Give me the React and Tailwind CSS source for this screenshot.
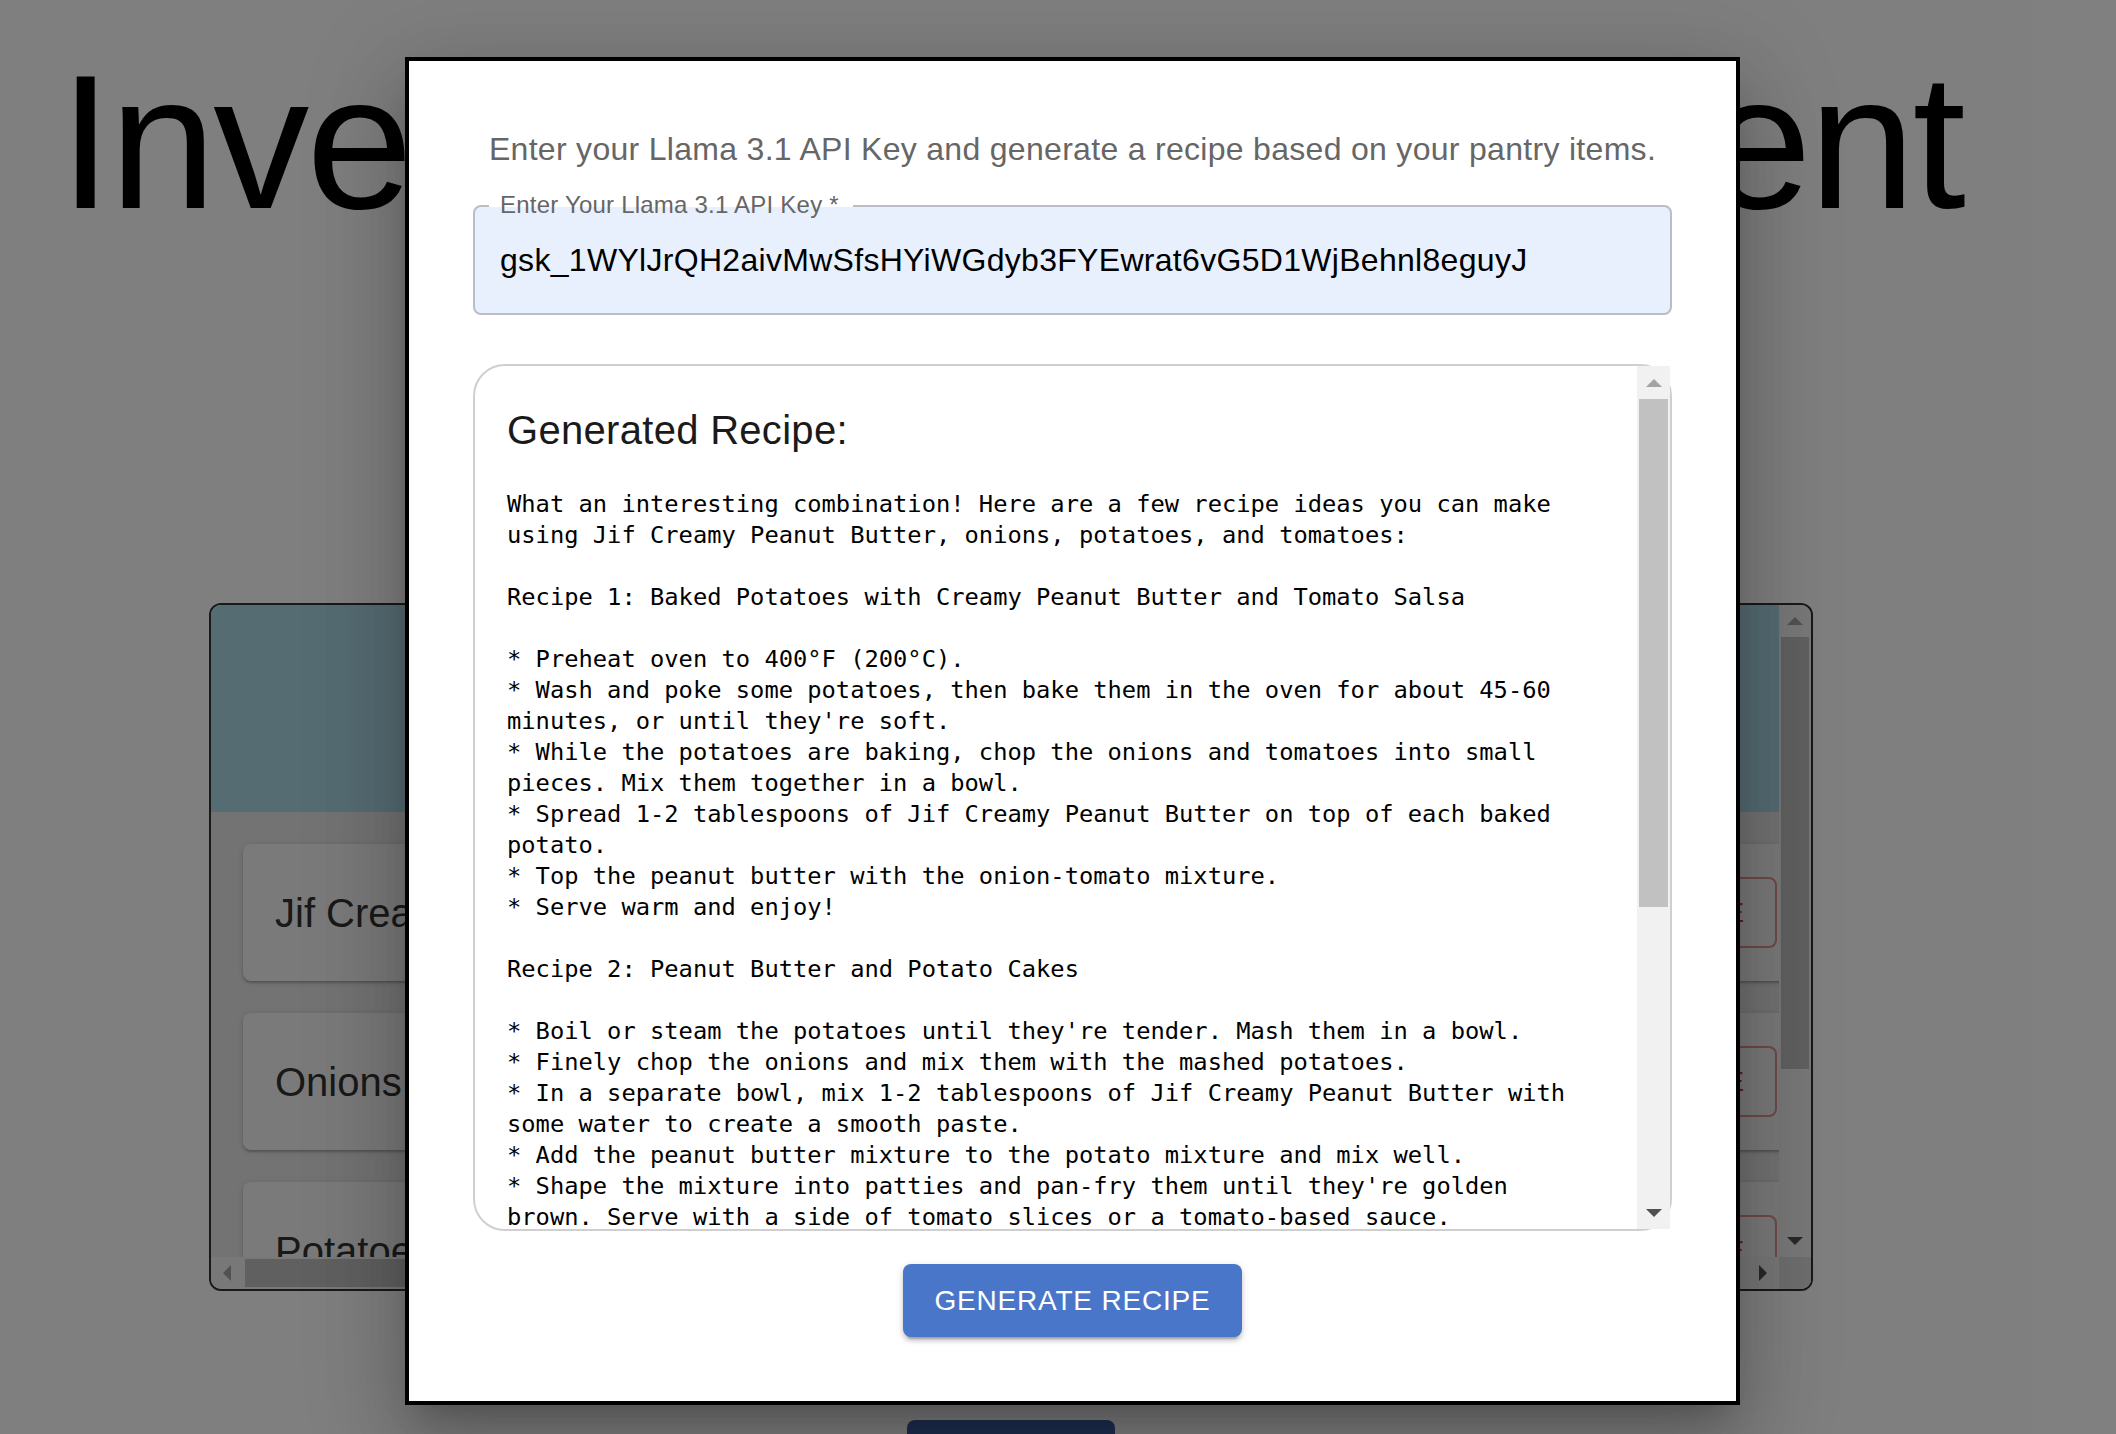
import React from 'react';

const recipeLines = [
  'What an interesting combination! Here are a few recipe ideas you can make',
  'using Jif Creamy Peanut Butter, onions, potatoes, and tomatoes:',
  '',
  'Recipe 1: Baked Potatoes with Creamy Peanut Butter and Tomato Salsa',
  '',
  '* Preheat oven to 400°F (200°C).',
  '* Wash and poke some potatoes, then bake them in the oven for about 45-60',
  "minutes, or until they're soft.",
  '* While the potatoes are baking, chop the onions and tomatoes into small',
  'pieces. Mix them together in a bowl.',
  '* Spread 1-2 tablespoons of Jif Creamy Peanut Butter on top of each baked',
  'potato.',
  '* Top the peanut butter with the onion-tomato mixture.',
  '* Serve warm and enjoy!',
  '',
  'Recipe 2: Peanut Butter and Potato Cakes',
  '',
  "* Boil or steam the potatoes until they're tender. Mash them in a bowl.",
  '* Finely chop the onions and mix them with the mashed potatoes.',
  '* In a separate bowl, mix 1-2 tablespoons of Jif Creamy Peanut Butter with',
  'some water to create a smooth paste.',
  '* Add the peanut butter mixture to the potato mixture and mix well.',
  "* Shape the mixture into patties and pan-fry them until they're golden",
  'brown. Serve with a side of tomato slices or a tomato-based sauce.',
  '',
  'Recipe 3: Tomato and Onion Soup with a Peanut Butter Swirl',
];

const pantry = [
  { name: 'Jif Creamy Peanut Butter', qty: 1 },
  { name: 'Onions', qty: 3 },
  { name: 'Potatoes', qty: 5 },
  { name: 'Tomatoes', qty: 4 },
];

// petite flèche de barre de défilement (style Chrome classique)
const Tri = ({ dir, color }) => {
  const vertical = dir === 'up' || dir === 'down';
  const points = {
    up: '0,8 8,0 16,8',
    down: '0,0 16,0 8,8',
    left: '8,0 8,16 0,8',
    right: '0,0 0,16 8,8',
  }[dir];
  return (
    <svg width={vertical ? 16 : 8} height={vertical ? 8 : 16} viewBox={vertical ? '0 0 16 8' : '0 0 8 16'}>
      <polygon points={points} fill={color} />
    </svg>
  );
};

const PantryCard = () => (
  <div className="mt-[349px] w-[1604px] h-[688px] border-2 border-[#333] rounded-[12px] overflow-hidden flex flex-col">
    <div className="flex flex-1 min-h-0">
      <div className="flex-1 min-w-0 overflow-hidden bg-[#e6e6e6]">
        <div className="w-[1630px]">
          <div className="h-[207px] bg-[#ADD8E6] flex items-center justify-center">
            <span className="text-[120px] text-[#333]">Inventory Items</span>
          </div>
          <div className="flex flex-col gap-[32px] px-[32px] pt-[32px] pb-[32px]">
            {pantry.map((p) => (
              <div
                key={p.name}
                className="h-[137px] w-[1566px] bg-[#f5f5f5] rounded-[8px] shadow-[0_2px_2px_rgba(0,0,0,0.2),0_1px_6px_rgba(0,0,0,0.12)] flex items-center justify-between px-[32px]"
              >
                <span className="text-[40px] text-[#333]">{p.name}</span>
                <span className="text-[40px] text-[#333]">Quantity: {p.qty}</span>
                <div className="flex items-center gap-[24px]">
                  <div className="h-[71px] px-[30px] flex items-center rounded-[8px] bg-[#3d5da2] text-white text-[28px] tracking-[0.8px]">
                    ADD
                  </div>
                  <div className="h-[71px] px-[30px] flex items-center rounded-[8px] border-2 border-[rgba(211,47,47,0.5)] text-[#d32f2f] text-[28px] tracking-[0.8px]">
                    REMOVE
                  </div>
                </div>
              </div>
            ))}
          </div>
        </div>
      </div>
      <div className="w-[32px] bg-[#f1f1f1] flex flex-col">
        <div className="h-[32px] flex items-center justify-center">
          <Tri dir="up" color="#a3a3a3" />
        </div>
        <div className="h-[432px] mx-[2px] bg-[#c1c1c1]" />
        <div className="flex-1" />
        <div className="h-[32px] flex items-center justify-center">
          <Tri dir="down" color="#505050" />
        </div>
      </div>
    </div>
    <div className="h-[32px] flex bg-[#f1f1f1]">
      <div className="w-[32px] flex items-center justify-center">
        <Tri dir="left" color="#a3a3a3" />
      </div>
      <div className="flex-1 flex py-[2px]">
        <div className="w-[1260px] bg-[#c1c1c1] ml-[2px]" />
      </div>
      <div className="w-[32px] flex items-center justify-center">
        <Tri dir="right" color="#505050" />
      </div>
      <div className="w-[32px] bg-[#dcdcdc]" />
    </div>
  </div>
);

const RecipeModal = () => (
  <div className="absolute left-[405px] top-[57px] w-[1335px] bg-white border-4 border-black px-[64px] pt-[64px] pb-[64px] shadow-[0_22px_30px_-14px_rgba(0,0,0,0.2),0_48px_76px_6px_rgba(0,0,0,0.14),0_18px_92px_16px_rgba(0,0,0,0.12)]">
    <p className="text-[32px] leading-[48px] tracking-[0.3px] text-center text-[#666]">
      Enter your Llama 3.1 API Key and generate a recipe based on your pantry items.
    </p>

    {/* champ de saisie de la clé (fond autofill) */}
    <div className="relative mt-[32px] h-[110px] border-2 border-[#b9bdc5] rounded-[8px] bg-[#e8f0fe] flex items-center pl-[25px]">
      <div className="absolute left-[14px] top-[-2px] h-[2px] w-[364px] bg-white" />
      <span className="absolute left-[25px] top-[-15px] text-[24px] leading-[26px] tracking-[0.22px] text-[#666] whitespace-nowrap">
        Enter Your Llama 3.1 API Key *
      </span>
      <span className="text-[32px] tracking-[0.3px] text-black whitespace-nowrap">
        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
      </span>
    </div>

    <div className="mt-[49px] h-[867px] border-2 border-[#cfcfcf] rounded-[32px] flex">
      <div className="flex-1 min-w-0 h-full overflow-hidden px-[32px] pt-[32px]">
        <h2 className="text-[40px] leading-[64px] tracking-[0.3px] text-[#1a1a1a]">Generated Recipe:</h2>
        <pre className="mt-[27px] font-['DejaVu_Sans_Mono',monospace] text-[23.75px] leading-[31px] text-black whitespace-pre">
          {recipeLines.join('\n')}
        </pre>
      </div>
      <div className="w-[33px] h-full bg-[#f1f1f1] flex flex-col">
        <div className="h-[33px] flex items-center justify-center">
          <Tri dir="up" color="#a3a3a3" />
        </div>
        <div className="h-[508px] mx-[2px] bg-[#c1c1c1]" />
        <div className="flex-1" />
        <div className="h-[33px] flex items-center justify-center">
          <Tri dir="down" color="#505050" />
        </div>
      </div>
    </div>

    <div className="mt-[33px] flex justify-center">
      <button className="h-[73px] px-[32px] rounded-[8px] bg-[#4a76c9] text-white text-[28px] leading-[49px] tracking-[0.8px] uppercase shadow-[0_6px_2px_-4px_rgba(0,0,0,0.2),0_4px_4px_0_rgba(0,0,0,0.14),0_2px_10px_0_rgba(0,0,0,0.12)]">
        Generate Recipe
      </button>
    </div>
  </div>
);

export default function App() {
  return (
    <div className="relative w-[2116px] h-[1434px] overflow-hidden bg-white font-['Liberation_Sans',Arial,sans-serif]">
      <div className="w-[2022px] flex flex-col items-center pt-[30px]">
        <h1 className="text-[192px] leading-[224px] tracking-[-3px] text-black whitespace-nowrap">
          Inventory Management
        </h1>
        <PantryCard />
        <div className="mt-[129px] w-[208px] h-[60px] rounded-[8px] bg-[#3d5da2]" />
      </div>

      {/* voile du modal */}
      <div className="absolute inset-0 bg-black/50" />
      <RecipeModal />
    </div>
  );
}
